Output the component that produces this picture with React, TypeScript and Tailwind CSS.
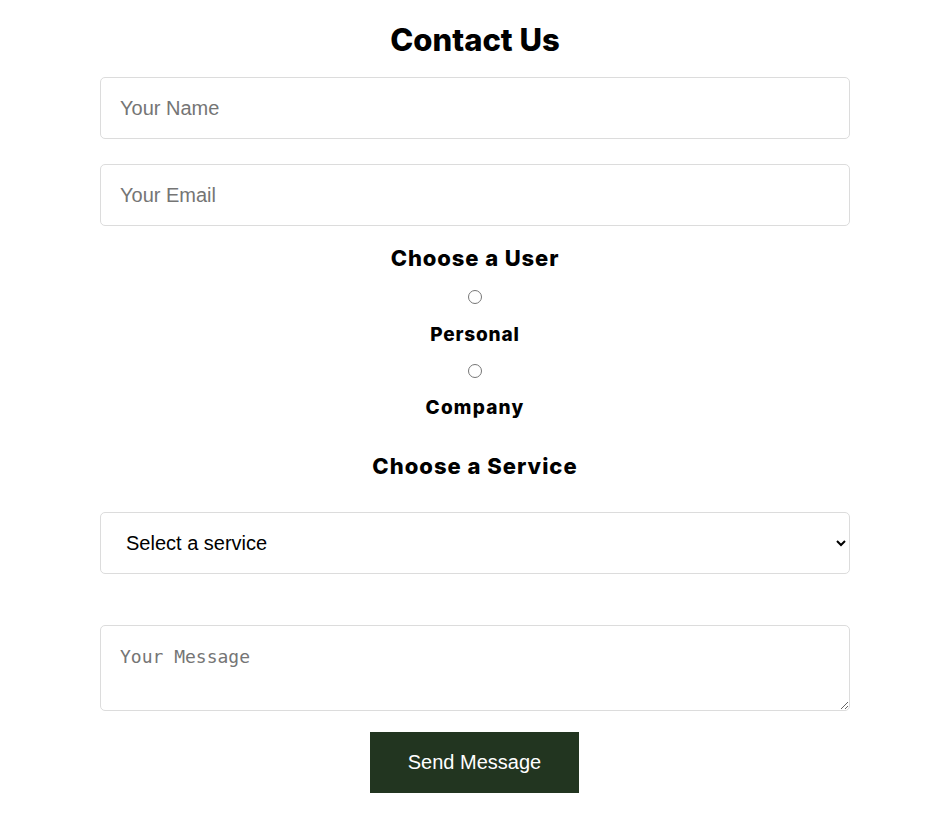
import React from 'react';

const heading = "font-['Inter',sans-serif] font-extrabold text-black text-center";

const App: React.FC = () => {
  return (
    <div className="min-h-[821px] bg-white">
      <form className="ml-[100px] flex w-[750px] flex-col pt-[20px]" onSubmit={e => e.preventDefault()}>
        <h1 className={`${heading} h-[40px] text-[31px] leading-[40px]`}>Contact Us</h1>

        <input
          type="text"
          placeholder="Your Name"
          className="mt-[17px] h-[62px] w-full rounded-[5px] border border-[#dcdcdc] px-[19px] font-['Liberation_Sans',sans-serif] text-[20px] text-black placeholder:text-[#757575] outline-none"
        />
        <input
          type="email"
          placeholder="Your Email"
          className="mt-[25px] h-[62px] w-full rounded-[5px] border border-[#dcdcdc] px-[19px] font-['Liberation_Sans',sans-serif] text-[20px] text-black placeholder:text-[#757575] outline-none"
        />

        {/* user type */}
        <h2 className={`${heading} mt-[16px] h-[32px] text-[22px] leading-[32px] tracking-[0.9px]`}>Choose a User</h2>
        <input type="radio" name="user" id="personal" className="mx-auto mt-[16px] h-[14px] w-[14px]" />
        <label htmlFor="personal" className={`${heading} mt-[17px] h-[28px] text-[19px] leading-[28px] tracking-[0.8px]`}>Personal</label>
        <input type="radio" name="user" id="company" className="mx-auto mt-[15px] h-[14px] w-[14px]" />
        <label htmlFor="company" className={`${heading} mt-[16px] h-[28px] text-[19px] leading-[28px] tracking-[1.2px]`}>Company</label>

        <h2 className={`${heading} mt-[28px] h-[32px] text-[22px] leading-[32px] tracking-[1px]`}>Choose a Service</h2>
        <select
          defaultValue=""
          className="mt-[30px] h-[62px] w-full rounded-[5px] border border-[#dcdcdc] pl-[21px] pr-[11px] font-['Liberation_Sans',sans-serif] text-[20px] text-black outline-none"
        >
          <option value="" disabled>Select a service</option>
          <option value="web">Web Design</option>
          <option value="dev">Development</option>
          <option value="seo">SEO</option>
        </select>

        <textarea
          placeholder="Your Message"
          className="mt-[51px] h-[86px] w-full rounded-[5px] border border-[#dcdcdc] px-[19px] pt-[17px] font-['DejaVu_Sans_Mono',monospace] text-[18px] text-black placeholder:text-[#757575] outline-none"
        />

        <button
          type="submit"
          className="ml-[270px] mt-[21px] h-[61px] w-[209px] self-start bg-[#223520] pb-[1px] font-['Liberation_Sans',sans-serif] text-[20px] text-white"
        >
          Send Message
        </button>
      </form>
    </div>
  );
};

export default App;
